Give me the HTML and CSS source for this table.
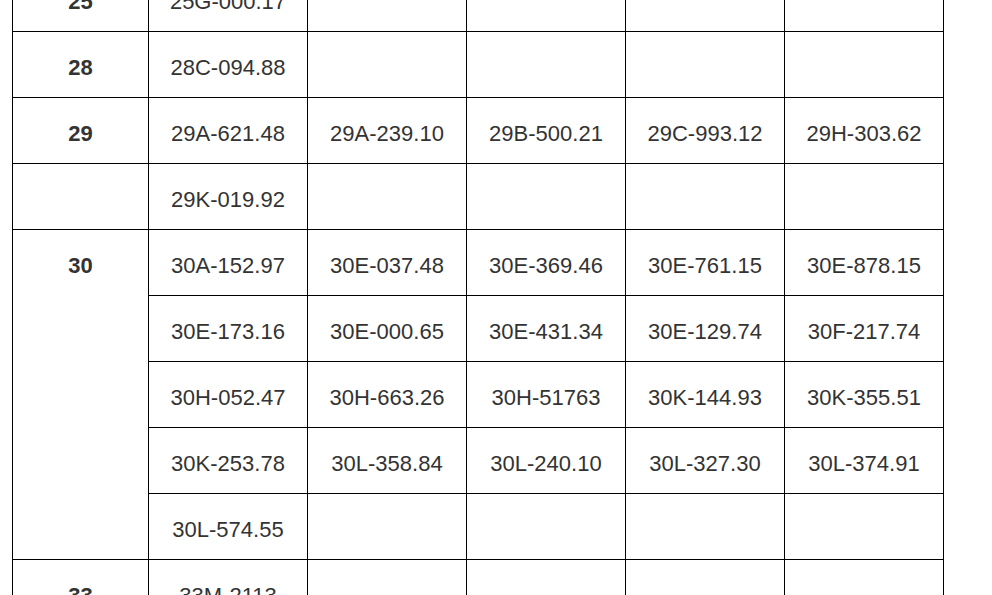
FILE: index.html
```html
<!DOCTYPE html>
<html>
<head>
<meta charset="utf-8">
<link rel="stylesheet" href="styles.css">
</head>
<body>
<div class="page">
<table class="plates">
<colgroup>
<col class="c-key"><col class="c-val"><col class="c-val"><col class="c-val"><col class="c-val"><col class="c-val">
</colgroup>
<tbody>
<tr><td class="key">25</td><td>25G-000.17</td><td></td><td></td><td></td><td></td></tr>
<tr><td class="key">28</td><td>28C-094.88</td><td></td><td></td><td></td><td></td></tr>
<tr><td class="key">29</td><td>29A-621.48</td><td>29A-239.10</td><td>29B-500.21</td><td>29C-993.12</td><td>29H-303.62</td></tr>
<tr><td class="key"></td><td>29K-019.92</td><td></td><td></td><td></td><td></td></tr>
<tr><td class="key" rowspan="5">30</td><td>30A-152.97</td><td>30E-037.48</td><td>30E-369.46</td><td>30E-761.15</td><td>30E-878.15</td></tr>
<tr><td>30E-173.16</td><td>30E-000.65</td><td>30E-431.34</td><td>30E-129.74</td><td>30F-217.74</td></tr>
<tr><td>30H-052.47</td><td>30H-663.26</td><td>30H-51763</td><td>30K-144.93</td><td>30K-355.51</td></tr>
<tr><td>30K-253.78</td><td>30L-358.84</td><td>30L-240.10</td><td>30L-327.30</td><td>30L-374.91</td></tr>
<tr><td>30L-574.55</td><td></td><td></td><td></td><td></td></tr>
<tr><td class="key">33</td><td>33M-2113</td><td></td><td></td><td></td><td></td></tr>
</tbody>
</table>
</div>
</body>
</html>
```

FILE: styles.css
```css
html, body {
  margin: 0;
  padding: 0;
  background: #fff;
  overflow: hidden;
}
.page {
  padding-left: 12px;
}
.plates {
  border-collapse: collapse;
  table-layout: fixed;
  width: 932px;
  margin-top: -35px;
  font-family: "Liberation Sans", Arial, sans-serif;
  font-size: 22px;
  line-height: 25px;
  color: #333;
}
.c-key { width: 136px; }
.c-val { width: 159px; }
.plates td {
  border: 1px solid #000;
  padding: 23px 0 17px;
  height: 25px;
  text-align: center;
  vertical-align: top;
  white-space: nowrap;
}
.plates td.key {
  font-weight: bold;
}
```
